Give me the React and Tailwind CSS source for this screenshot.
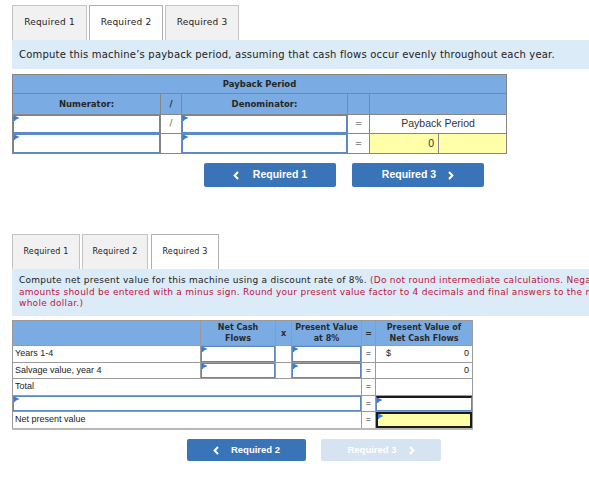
import React from "react";

const verdana = "font-['DejaVu_Sans',Verdana,sans-serif]";
const arial = "font-['Liberation_Sans',Arial,sans-serif]";

function Flag() {
  return (
    <svg className="absolute left-0 top-0" width="6" height="5" viewBox="0 0 6 5">
      <path d="M0 0H1.2L5.5 2L1.2 4V5H0Z" fill="#3a7bd0" />
    </svg>
  );
}

function InputBox({ className }) {
  return (
    <div className={`relative w-full border border-[#5b88c4] bg-white ${className}`}>
      <Flag />
    </div>
  );
}

function Chevron({ left }) {
  return (
    <svg width="6" height="9" viewBox="0 0 6 9" className="shrink-0">
      <path
        d={left ? "M5 1L1.6 4.5L5 8" : "M1 1L4.4 4.5L1 8"}
        fill="none"
        stroke="currentColor"
        strokeWidth="2"
      />
    </svg>
  );
}

const tab =
  "flex items-center justify-center border border-b-0 border-[#c4c4c4] bg-[#f1f1f1] text-[#222]";
const tabOn =
  "flex items-center justify-center border border-b-0 border-[#b0b0b0] bg-white text-[#222]";

const g1 = "border border-[#868686] p-0";
const h1 = "border border-[#868686] bg-[#7aace3] p-0 text-center text-[8.5px] font-bold text-[#262626]";

const g2 = "border border-[#9a9a9a] p-0";
const h2 = "border border-[#9a9a9a] bg-[#7aace3] p-0 text-center text-[8px] font-bold leading-[11px] text-[#2a2a2a]";

export default function App() {
  return (
    <div className={`w-full overflow-hidden bg-white pt-[3px] ${verdana}`}>
      {/* ======================
          REQUIRED 2
      ====================== */}
      <div className="flex h-[37px] gap-[2px] pl-[12px] pt-[2px] text-[9px] tracking-[0.2px]">
        <div className={`${tab} w-[75px]`}>Required 1</div>
        <div className={`${tabOn} w-[74px]`}>Required 2</div>
        <div className={`${tab} w-[74px]`}>Required 3</div>
      </div>
      <div className="ml-[12px] flex h-[29px] w-[650px] items-center bg-[#dcebf8] pl-[7px] text-[10px] tracking-[0.2px] text-[#222]">
        Compute this machine’s payback period, assuming that cash flows occur evenly throughout each year.
      </div>

      <table className="ml-[12px] mt-[5px] w-[494px] table-fixed border-collapse">
        <colgroup>
          <col className="w-[148px]" />
          <col className="w-[21px]" />
          <col className="w-[166px]" />
          <col className="w-[22px]" />
          <col className="w-[69px]" />
          <col className="w-[68px]" />
        </colgroup>
        <tbody>
          <tr className="h-[19px]">
            <th colSpan={6} className={h1}>Payback Period</th>
          </tr>
          <tr className="h-[21px]">
            <th className={h1}>Numerator:</th>
            <th className={h1}>/</th>
            <th className={h1}>Denominator:</th>
            <th className={h1}></th>
            <th colSpan={2} className={h1}></th>
          </tr>
          <tr className="h-[19px]">
            <td className={g1}><InputBox className="h-[18px]" /></td>
            <td className={`${g1} text-center text-[9px] text-[#7a6040]`}>/</td>
            <td className={g1}><InputBox className="h-[18px]" /></td>
            <td className={`${g1} text-center text-[9px] text-[#333]`}>=</td>
            <td colSpan={2} className={`${g1} text-center text-[10.5px] text-[#333] ${arial}`}>Payback Period</td>
          </tr>
          <tr className="h-[20px]">
            <td className={g1}><InputBox className="h-[19px]" /></td>
            <td className={g1}></td>
            <td className={g1}><InputBox className="h-[19px]" /></td>
            <td className={`${g1} text-center text-[9px] text-[#333]`}>=</td>
            <td className={`${g1} bg-[#ffffaa] pr-[4px] text-right text-[10.5px] text-[#333] ${arial}`}>0</td>
            <td className={`${g1} bg-[#ffffaa]`}></td>
          </tr>
        </tbody>
      </table>

      <div className={`ml-[204px] mt-[9px] flex gap-[16px] text-[10.5px] font-bold text-white ${arial}`}>
        <div className="flex h-[24px] w-[132px] items-center justify-center gap-[14px] rounded-[2px] bg-[#3a74b8]">
          <Chevron left />
          <span>Required 1</span>
        </div>
        <div className="flex h-[24px] w-[132px] items-center justify-center gap-[12px] rounded-[2px] bg-[#3a74b8]">
          <span>Required 3</span>
          <Chevron />
        </div>
      </div>

      {/* ======================
          REQUIRED 3
      ====================== */}
      <div className="mt-[47px] flex h-[35px] pl-[12px] text-[8px] tracking-[0.2px]">
        <div className={`${tab} w-[68px]`}>Required 1</div>
        <div className={`${tab} ml-[2px] w-[66px]`}>Required 2</div>
        <div className={`${tabOn} ml-[3px] w-[68px]`}>Required 3</div>
      </div>
      <div className="ml-[12px] h-[47px] w-[660px] whitespace-nowrap bg-[#dcebf8] pl-[7px] pt-[6px] text-[9px] leading-[11.5px] tracking-[0.27px] text-[#222]">
        Compute net present value for this machine using a discount rate of 8%.{" "}
        <span className="text-[#c0143c]">
          (Do not round intermediate calculations. Negative
          <br />
          amounts should be entered with a minus sign. Round your present value factor to 4 decimals and final answers to the nearest
          <br />
          whole dollar.)
        </span>
      </div>

      <table className="ml-[12px] mt-[4px] w-[460px] table-fixed border-collapse border-b-2 border-b-[#b8b8b8]">
        <colgroup>
          <col className="w-[188px]" />
          <col className="w-[75px]" />
          <col className="w-[16px]" />
          <col className="w-[70px]" />
          <col className="w-[14px]" />
          <col className="w-[97px]" />
        </colgroup>
        <tbody>
          <tr className="h-[25px]">
            <th className={h2}></th>
            <th className={h2}>Net Cash<br />Flows</th>
            <th className={h2}>x</th>
            <th className={h2}>Present Value<br />at 8%</th>
            <th className={h2}>=</th>
            <th className={h2}>Present Value of<br />Net Cash Flows</th>
          </tr>
          <tr className={`h-[17px] text-[9px] text-[#222] ${arial}`}>
            <td className={`${g2} pl-[2px]`}>Years 1-4</td>
            <td className={g2}><InputBox className="h-[16px]" /></td>
            <td className={g2}></td>
            <td className={g2}><InputBox className="h-[16px]" /></td>
            <td className={`${g2} text-center`}>=</td>
            <td className={g2}>
              <div className="flex justify-between pl-[10px] pr-[3px]">
                <span>$</span>
                <span>0</span>
              </div>
            </td>
          </tr>
          <tr className={`h-[16px] text-[9px] text-[#222] ${arial}`}>
            <td className={`${g2} pl-[2px]`}>Salvage value, year 4</td>
            <td className={g2}><InputBox className="h-[15px]" /></td>
            <td className={g2}></td>
            <td className={g2}><InputBox className="h-[15px]" /></td>
            <td className={`${g2} text-center`}>=</td>
            <td className={`${g2} pr-[3px] text-right`}>0</td>
          </tr>
          <tr className={`h-[17px] text-[9px] text-[#222] ${arial}`}>
            <td colSpan={4} className={`${g2} pl-[2px]`}>Total</td>
            <td className={`${g2} text-center`}>=</td>
            <td className={g2}></td>
          </tr>
          <tr className={`h-[16px] text-[9px] text-[#222] ${arial}`}>
            <td colSpan={4} className={g2}><InputBox className="h-[15px]" /></td>
            <td className={`${g2} text-center`}>=</td>
            <td className={g2}>
              <div className="relative h-[15px] w-full border border-t-2 border-[#5b88c4] border-t-[#1a1a1a] bg-white">
                <Flag />
              </div>
            </td>
          </tr>
          <tr className={`h-[17px] text-[9px] text-[#222] ${arial}`}>
            <td colSpan={4} className={`${g2} pl-[2px]`}>Net present value</td>
            <td className={`${g2} text-center`}>=</td>
            <td className={g2}>
              <div className="relative h-[16px] w-full border-2 border-[#1a1a1a] bg-[#ffffaa]">
                <Flag />
              </div>
            </td>
          </tr>
        </tbody>
      </table>

      <div className={`ml-[187px] mt-[9px] flex gap-[15px] text-[9.5px] font-bold text-white ${arial}`}>
        <div className="flex h-[22px] w-[119px] items-center justify-center gap-[12px] rounded-[2px] bg-[#3a74b8]">
          <Chevron left />
          <span>Required 2</span>
        </div>
        <div className="flex h-[22px] w-[120px] items-center justify-center gap-[12px] rounded-[2px] bg-[#d6e3f1]">
          <span>Required 3</span>
          <Chevron />
        </div>
      </div>
      <div className="h-[25px]" />
    </div>
  );
}
